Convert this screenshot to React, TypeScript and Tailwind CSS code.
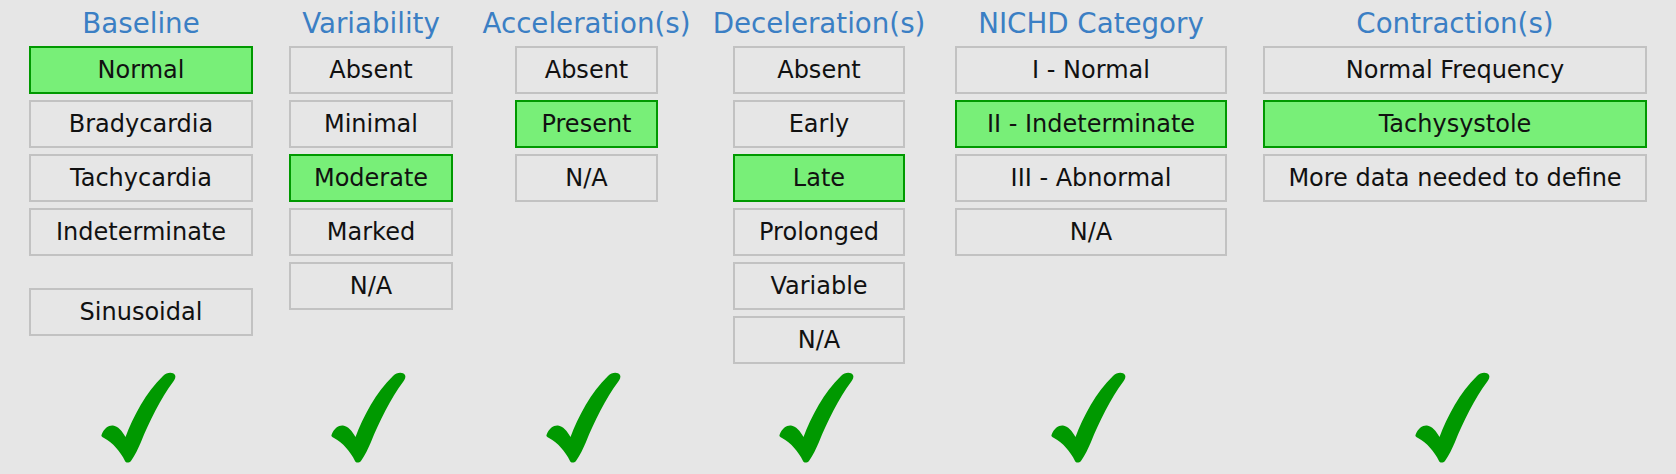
import React from 'react';

type Column = {
  title: string;
  width: string;
  margin: string;
  options: { label: string; on?: boolean; spaced?: boolean }[];
};

const columns: Column[] = [
  {
    title: 'Baseline',
    width: 'w-[224px]',
    margin: 'ml-[29px]',
    options: [
      { label: 'Normal', on: true },
      { label: 'Bradycardia' },
      { label: 'Tachycardia' },
      { label: 'Indeterminate' },
      { label: 'Sinusoidal', spaced: true },
    ],
  },
  {
    title: 'Variability',
    width: 'w-[164px]',
    margin: 'ml-[36px]',
    options: [
      { label: 'Absent' },
      { label: 'Minimal' },
      { label: 'Moderate', on: true },
      { label: 'Marked' },
      { label: 'N/A' },
    ],
  },
  {
    title: 'Acceleration(s)',
    width: 'w-[143px]',
    margin: 'ml-[62px]',
    options: [{ label: 'Absent' }, { label: 'Present', on: true }, { label: 'N/A' }],
  },
  {
    title: 'Deceleration(s)',
    width: 'w-[172px]',
    margin: 'ml-[75px]',
    options: [
      { label: 'Absent' },
      { label: 'Early' },
      { label: 'Late', on: true },
      { label: 'Prolonged' },
      { label: 'Variable' },
      { label: 'N/A' },
    ],
  },
  {
    title: 'NICHD Category',
    width: 'w-[272px]',
    margin: 'ml-[50px]',
    options: [
      { label: 'I - Normal' },
      { label: 'II - Indeterminate', on: true },
      { label: 'III - Abnormal' },
      { label: 'N/A' },
    ],
  },
  {
    title: 'Contraction(s)',
    width: 'w-[384px]',
    margin: 'ml-[36px]',
    options: [
      { label: 'Normal Frequency' },
      { label: 'Tachysystole', on: true },
      { label: 'More data needed to define' },
    ],
  },
];

// svg is 6px wider than the mark so it sits a little left of the column center
const Check: React.FC = () => (
  <svg width="81" height="91" viewBox="0 0 81 91">
    <path
      fill="#009900"
      d="M0.5,63 C3,56 8,53 12,53.5 C17,54 21,59 24.5,65 C32,45 45,20 62,4 C66,0 72,0 74,3 C75,5 74,7 72,10 C60,26 48,50 40,70 C37,77 34,83 30,89 C28,91 25,91 24,89 C19,79 12,71 3,66 C1,65 0,64 0.5,63 Z"
    />
  </svg>
);

const App: React.FC = () => {
  return (
    <div
      className="w-[1676px] h-[474px] bg-[#e6e6e6] text-[#111] overflow-hidden"
      style={{ fontFamily: '"DejaVu Sans", Verdana, sans-serif' }}
    >
      <div className="flex items-start pt-[8px]">
        {columns.map(col => (
          <div key={col.title} className={`${col.margin} ${col.width} flex flex-col items-center shrink-0`}>
            <div className="text-[27.7px] leading-[32px] text-[#3b7fc4] whitespace-nowrap mb-[6px]">
              {col.title}
            </div>
            <div className="flex flex-col gap-[6px] w-full">
              {col.options.map(opt => (
                <div
                  key={opt.label}
                  className={`h-[48px] w-full flex items-center justify-center border-2 text-[24px] whitespace-nowrap ${
                    opt.on ? 'bg-[#78ef78] border-[#009900]' : 'border-[#c2c2c2]'
                  } ${opt.spaced ? 'mt-[26px]' : ''}`}
                >
                  {opt.label}
                </div>
              ))}
            </div>
          </div>
        ))}
      </div>
      <div className="flex mt-[8px]">
        {columns.map(col => (
          <div key={col.title} className={`${col.margin} ${col.width} flex justify-center shrink-0`}>
            <Check />
          </div>
        ))}
      </div>
    </div>
  );
};

export default App;
